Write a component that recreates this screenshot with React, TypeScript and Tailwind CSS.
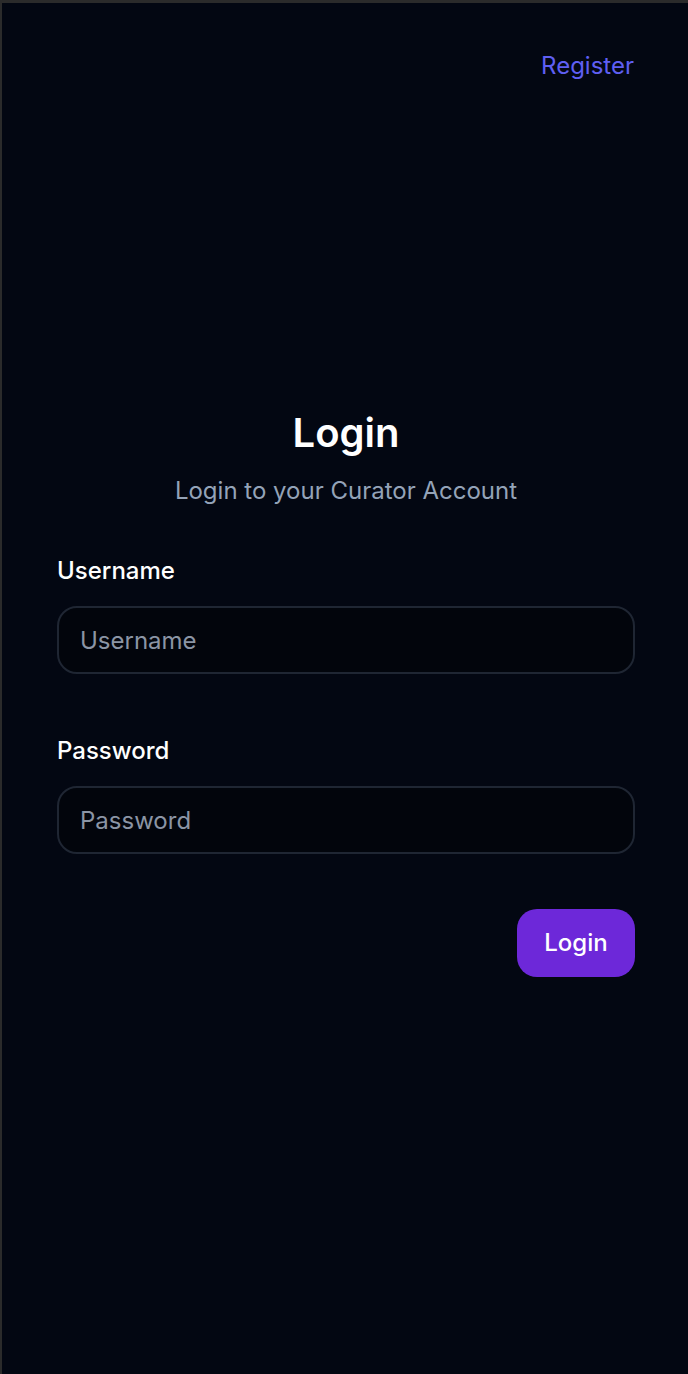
import React, { useState } from 'react';

export default function App() {
  const [username, setUsername] = useState('');
  const [password, setPassword] = useState('');

  return (
    <div
      className="min-h-screen bg-[#030712] border-t-[3px] border-l-2 border-[#2b2b2b] flex flex-col"
      style={{ fontFamily: 'Inter, "Noto Sans", sans-serif' }}
    >
      {/* Top nav */}
      <header className="flex justify-end pl-[55px] pr-[54px] pt-[47px]">
        <a href="#" className="text-[24px] leading-[32px] text-[#5f5ff2]">
          Register
        </a>
      </header>

      <main className="pl-[55px] pr-[53px] mt-[327px]">
        <div className="text-center">
          <h1 className="text-[40px] leading-[48px] font-semibold text-white">Login</h1>
          <p className="mt-[18px] text-[24px] leading-[32px] text-[#94a3b8]">Login to your Curator Account</p>
        </div>

        <form className="mt-[48px] flex flex-col" onSubmit={(e) => e.preventDefault()}>
          <label className="text-[24px] leading-[32px] font-medium text-white">Username</label>
          <input
            value={username}
            onChange={(e) => setUsername(e.target.value)}
            placeholder="Username"
            className="mt-[19px] h-[68px] rounded-[20px] border-2 border-[#1f2633] bg-[#02050c] px-[21px] text-[24px] text-white placeholder:text-[#8b95a5] outline-none"
          />

          <label className="mt-[61px] text-[24px] leading-[32px] font-medium text-white">Password</label>
          <input
            type="password"
            value={password}
            onChange={(e) => setPassword(e.target.value)}
            placeholder="Password"
            className="mt-[19px] h-[68px] rounded-[20px] border-2 border-[#1f2633] bg-[#02050c] px-[21px] text-[24px] text-white placeholder:text-[#8b95a5] outline-none"
          />

          <div className="mt-[55px] flex justify-end">
            <button
              type="submit"
              className="h-[68px] w-[118px] rounded-[20px] bg-[#6d28d9] text-[24px] font-medium text-white"
            >
              Login
            </button>
          </div>
        </form>
      </main>
    </div>
  );
}
